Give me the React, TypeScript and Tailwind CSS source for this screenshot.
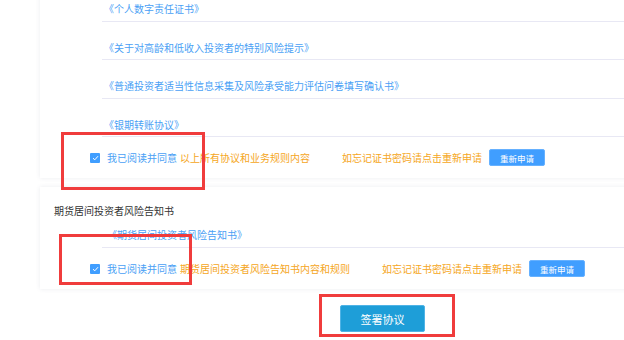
import React from "react";

const links = [
  "《个人数字责任证书》",
  "《关于对高龄和低收入投资者的特别风险提示》",
  "《普通投资者适当性信息采集及风险承受能力评估问卷填写确认书》",
  "《银期转账协议》",
];

function Check() {
  return (
    <span className="flex h-[10px] w-[10px] items-center justify-center rounded-[1px] bg-[#409eff]">
      <svg width="7" height="6" viewBox="0 0 7 6" fill="none">
        <path d="M1 3.2 2.8 4.8 6 1.2" stroke="#fff" strokeWidth="1" />
      </svg>
    </span>
  );
}

function AgreeRow({ text }: { text: string }) {
  return (
    <div className="flex h-[41px] items-center pl-[50px]">
      <Check />
      <span className="ml-[7px] text-[#4a9ff5]">我已阅读并同意</span>
      <span className="ml-[3px] text-[#f5a623]">{text}</span>
      <span className="ml-[32px] text-[#f5a623]">如忘记证书密码请点击重新申请</span>
      <button className="ml-[7px] flex h-[17px] w-[56px] items-center justify-center rounded-[2px] border border-[#66b1ff] bg-[#409eff] text-[8.5px] text-white">
        重新申请
      </button>
    </div>
  );
}

export default function App() {
  return (
    <div
      className="relative h-[340px] w-[624px] overflow-hidden bg-white text-[10px] leading-[14px]"
      style={{ fontFamily: '"Noto Sans CJK SC", "Noto Sans", sans-serif' }}
    >
      <div className="mt-[-17px] ml-[40px] w-[620px] bg-white shadow-[0_0_5px_rgba(40,50,90,0.09)]">
        <div className="ml-[62px]">
          {links.map((l) => (
            <div key={l} className="flex h-[38.5px] items-end border-b border-[#e8e8f4] pb-[4.5px] pl-[2px] text-[#4a9ff5]">
              {l}
            </div>
          ))}
        </div>
        <AgreeRow text="以上所有协议和业务规则内容" />
      </div>

      <div className="mt-[9px] ml-[40px] w-[620px] bg-white pt-[17px] shadow-[0_0_5px_rgba(40,50,90,0.09)]">
        <div className="pl-[14px] text-[#333]">期货居间投资者风险告知书</div>
        <div className="ml-[62px] mt-[10px] border-b border-[#e8e8f4] pb-[5px] pl-[5px] text-[#4a9ff5]">
          《期货居间投资者风险告知书》
        </div>
        <AgreeRow text="期货居间投资者风险告知书内容和规则" />
      </div>

      <button className="mt-[16px] ml-[340px] flex h-[27px] w-[85px] items-center justify-center rounded-[2px] border border-[#4fb3e6] bg-[#1e9ed8] text-[11px] text-white">
        签署协议
      </button>

      <div className="absolute left-[61px] top-[132px] h-[58px] w-[144px] border-[3px] border-[#f03c3c]" />
      <div className="absolute left-[59px] top-[234px] h-[51px] w-[133px] border-[3px] border-[#f03c3c]" />
      <div className="absolute left-[319px] top-[294px] h-[43px] w-[136px] border-[3px] border-[#f03c3c]" />
    </div>
  );
}
